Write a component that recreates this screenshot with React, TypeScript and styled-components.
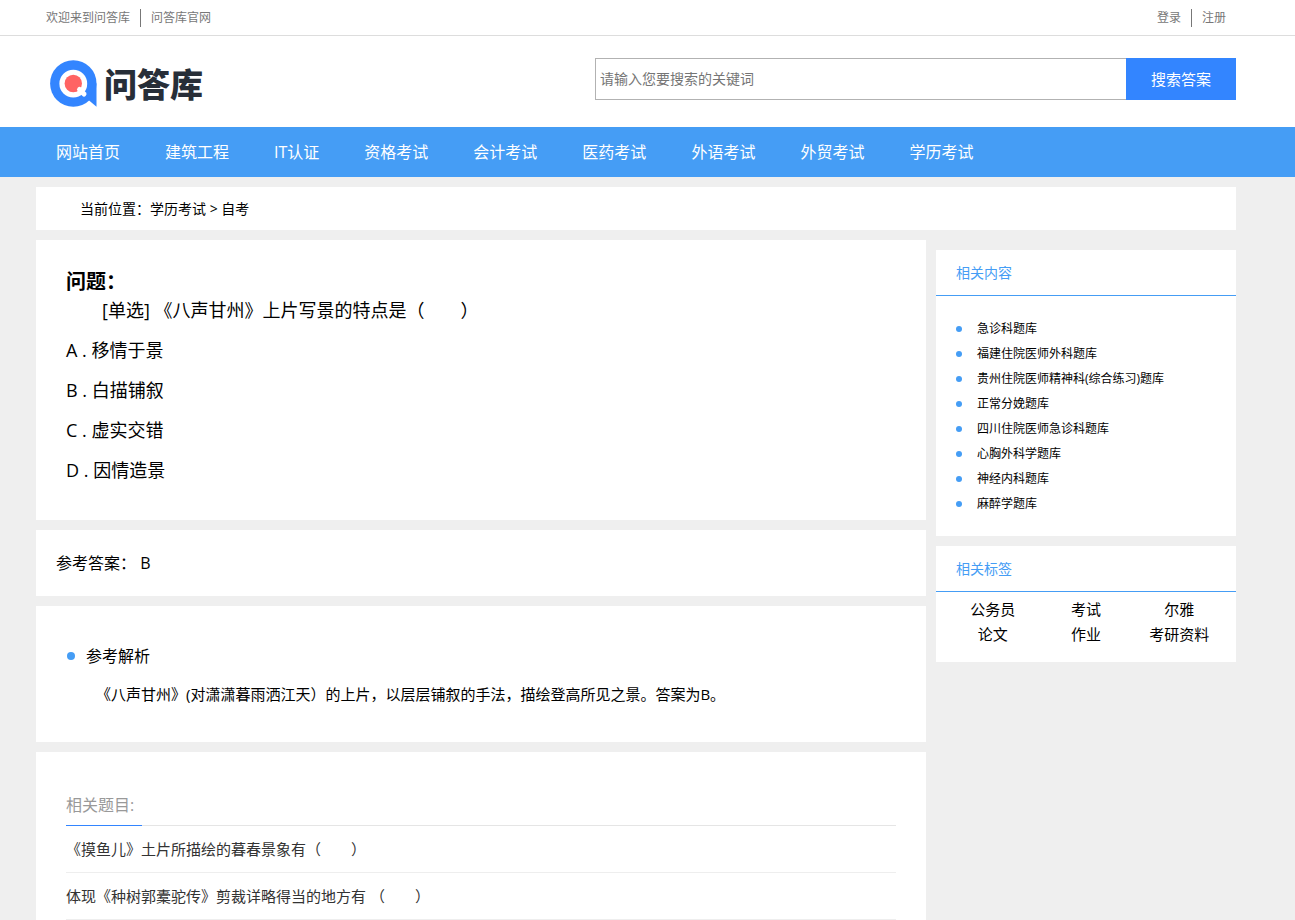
import React from "react";
import styled, { createGlobalStyle } from "styled-components";

const GlobalStyle = createGlobalStyle`
  * { box-sizing: border-box; }
  body {
    margin: 0;
    background: #efefef;
    color: #000;
    font-family: "Open Sans", "Noto Sans CJK SC", sans-serif;
    font-size: 14px;
  }
  h1, h2, p, ul, ol { margin: 0; padding: 0; font-weight: 400; }
  ul, ol { list-style: none; }
  a { color: inherit; text-decoration: none; }
`;

const Wrap = styled.div`
  padding: 0 59px 0 36px;
`;

const TopBar = styled.div`
  background: #fff;
  border-bottom: 1px solid #ddd;
`;

const TopInner = styled(Wrap)`
  display: flex;
  justify-content: space-between;
  align-items: center;
  height: 35px;
`;

const TopLinks = styled.div`
  display: flex;
  font-size: 12px;
  line-height: 18px;
  color: #777;
  a { padding: 0 10px; }
  a + a { border-left: 1px solid #777; }
`;

const Header = styled.header`
  background: #fff;
`;

const HeaderInner = styled(Wrap)`
  display: flex;
  justify-content: space-between;
  align-items: flex-start;
  padding-top: 22px;
  padding-bottom: 18px;
`;

const Logo = styled.a`
  display: flex;
  align-items: center;
  gap: 6px;
  padding-left: 14px;
  color: #272e38;
  font-family: "Noto Sans CJK SC", sans-serif;
  font-size: 33px;
  line-height: 51px;
  font-weight: 900;
  svg { display: block; }
`;

const Search = styled.form`
  display: flex;
  flex: 0 1 641px;
  height: 42px;
`;

const SearchInput = styled.input`
  flex: 1;
  min-width: 0;
  border: 1px solid #b2b2b2;
  border-right: 0;
  border-radius: 0;
  padding: 0 4px 2px;
  background: #fff;
  font: inherit;
  font-size: 14px;
  outline: none;
  &::placeholder { color: #757575; opacity: 1; }
`;

const SearchButton = styled.button`
  width: 110px;
  border: 0;
  padding: 0 0 2px;
  background: #3385ff;
  color: #fff;
  font: inherit;
  font-size: 15px;
`;

const Nav = styled.nav`
  background: #459df5;
`;

const NavList = styled(Wrap)`
  display: flex;
  gap: 45px;
  font-size: 16px;
  line-height: 50px;
  color: #fff;
  a:first-child { margin-left: 20px; }
`;

const Card = styled.section`
  background: #fff;
`;

const Crumbs = styled(Card)`
  margin-top: 10px;
  padding-left: 44px;
  line-height: 43px;
`;

const Columns = styled.div`
  display: flex;
  align-items: flex-start;
  gap: 10px;
  padding-top: 10px;
`;

const Main = styled.main`
  flex: 1;
  min-width: 0;
  display: flex;
  flex-direction: column;
  gap: 10px;
`;

const QuestionCard = styled(Card)`
  padding: 26px 30px 30px;
  font-size: 18px;
`;

const QuestionTitle = styled.h1`
  font-size: 20px;
  line-height: 32px;
  font-weight: 700;
`;

const QuestionText = styled.p`
  line-height: 24px;
  text-indent: 2em;
  margin-bottom: 8px;
`;

const Option = styled.li`
  line-height: 40px;
`;

const AnswerCard = styled(Card)`
  padding: 0 20px;
  font-size: 16px;
  line-height: 66px;
`;

const AnalysisCard = styled(Card)`
  padding: 35px 30px 33px;
`;

const Dot = styled.span<{ $size: number }>`
  flex: none;
  width: ${(p) => p.$size}px;
  height: ${(p) => p.$size}px;
  border-radius: 50%;
  background: #459df5;
`;

const AnalysisTitle = styled.h2`
  display: flex;
  align-items: center;
  gap: 11px;
  padding-left: 1px;
  font-size: 16px;
  line-height: 30px;
`;

const AnalysisText = styled.p`
  margin-top: 8px;
  font-size: 15px;
  line-height: 30px;
  text-indent: 2em;
`;

const RelatedCard = styled(Card)`
  padding: 33px 30px 0;
`;

const RelatedHead = styled.div`
  display: flex;
  border-bottom: 1px solid #e5e5e5;
`;

const RelatedTitle = styled.h2`
  margin-bottom: -1px;
  padding-right: 8px;
  border-bottom: 1px solid #3385ff;
  color: #999;
  font-size: 16px;
  line-height: 40px;
`;

const RelatedRow = styled.li`
  border-bottom: 1px solid #eee;
  color: #333;
  font-size: 15px;
  line-height: 46px;
`;

const Sidebar = styled.aside`
  flex: none;
  width: 300px;
  display: flex;
  flex-direction: column;
  gap: 10px;
  padding-top: 10px;
`;

const SideTitle = styled.h2`
  padding-left: 20px;
  border-bottom: 1px solid #459df5;
  color: #459df5;
  font-size: 14px;
  line-height: 45px;
`;

const SideList = styled.ul`
  padding: 20px;
  font-size: 12px;
  line-height: 25px;
  li {
    display: flex;
    align-items: center;
    gap: 15px;
  }
`;

const Tags = styled.div`
  display: grid;
  grid-template-columns: repeat(3, 1fr);
  padding: 5px 10px 15px;
  font-size: 15px;
  line-height: 25px;
  text-align: center;
`;

const navItems = ["网站首页", "建筑工程", "IT认证", "资格考试", "会计考试", "医药考试", "外语考试", "外贸考试", "学历考试"];
const options = ["A . 移情于景", "B . 白描铺叙", "C . 虚实交错", "D . 因情造景"];
const related = [
  "《摸鱼儿》土片所描绘的暮春景象有（　　）",
  "体现《种树郭橐驼传》剪裁详略得当的地方有 （　　）",
];
const banks = [
  "急诊科题库",
  "福建住院医师外科题库",
  "贵州住院医师精神科(综合练习)题库",
  "正常分娩题库",
  "四川住院医师急诊科题库",
  "心胸外科学题库",
  "神经内科题库",
  "麻醉学题库",
];
const tags = ["公务员", "考试", "尔雅", "论文", "作业", "考研资料"];

export default function App() {
  return (
    <div lang="zh-CN">
      <GlobalStyle />
      <TopBar>
        <TopInner>
          <TopLinks>
            <a href="#">欢迎来到问答库</a>
            <a href="#">问答库官网</a>
          </TopLinks>
          <TopLinks>
            <a href="#">登录</a>
            <a href="#">注册</a>
          </TopLinks>
        </TopInner>
      </TopBar>
      <Header>
        <HeaderInner>
          <Logo href="#">
            <svg width="48" height="48" viewBox="0 0 48 48" aria-hidden="true">
              <circle cx="23.3" cy="23.5" r="23.2" fill="#3385ff" />
              <path d="M46.5 23V46.8L38.5 40Z" fill="#3385ff" />
              <circle cx="23.3" cy="23.7" r="13.9" fill="#fff" />
              <circle cx="23.3" cy="23.5" r="8.7" fill="#ff6464" />
              <path d="M29.5 29.5L34 34" stroke="#fff" strokeWidth="5" strokeLinecap="round" />
            </svg>
            问答库
          </Logo>
          <Search onSubmit={(e) => e.preventDefault()}>
            <SearchInput type="text" aria-label="搜索" placeholder="请输入您要搜索的关键词" />
            <SearchButton type="submit">搜索答案</SearchButton>
          </Search>
        </HeaderInner>
      </Header>
      <Nav>
        <NavList>
          {navItems.map((t) => (
            <a href="#" key={t}>{t}</a>
          ))}
        </NavList>
      </Nav>
      <Wrap>
        <Crumbs>
          当前位置：<a href="#">学历考试</a> &gt; <a href="#">自考</a>
        </Crumbs>
        <Columns>
          <Main>
            <QuestionCard>
              <QuestionTitle>问题：</QuestionTitle>
              <QuestionText>[单选] 《八声甘州》上片写景的特点是（　　）</QuestionText>
              <ul>
                {options.map((t) => (
                  <Option key={t}>{t}</Option>
                ))}
              </ul>
            </QuestionCard>
            <AnswerCard>参考答案： B</AnswerCard>
            <AnalysisCard>
              <AnalysisTitle>
                <Dot $size={8} />
                参考解析
              </AnalysisTitle>
              <AnalysisText>
                《八声甘州》(对潇潇暮雨洒江天）的上片，以层层铺叙的手法，描绘登高所见之景。答案为B。
              </AnalysisText>
            </AnalysisCard>
            <RelatedCard>
              <RelatedHead>
                <RelatedTitle>相关题目:</RelatedTitle>
              </RelatedHead>
              <ul>
                {related.map((t) => (
                  <RelatedRow key={t}>
                    <a href="#">{t}</a>
                  </RelatedRow>
                ))}
              </ul>
            </RelatedCard>
          </Main>
          <Sidebar>
            <Card>
              <SideTitle>相关内容</SideTitle>
              <SideList>
                {banks.map((t) => (
                  <li key={t}>
                    <Dot $size={6} />
                    <a href="#">{t}</a>
                  </li>
                ))}
              </SideList>
            </Card>
            <Card>
              <SideTitle>相关标签</SideTitle>
              <Tags>
                {tags.map((t) => (
                  <a href="#" key={t}>{t}</a>
                ))}
              </Tags>
            </Card>
          </Sidebar>
        </Columns>
      </Wrap>
    </div>
  );
}
